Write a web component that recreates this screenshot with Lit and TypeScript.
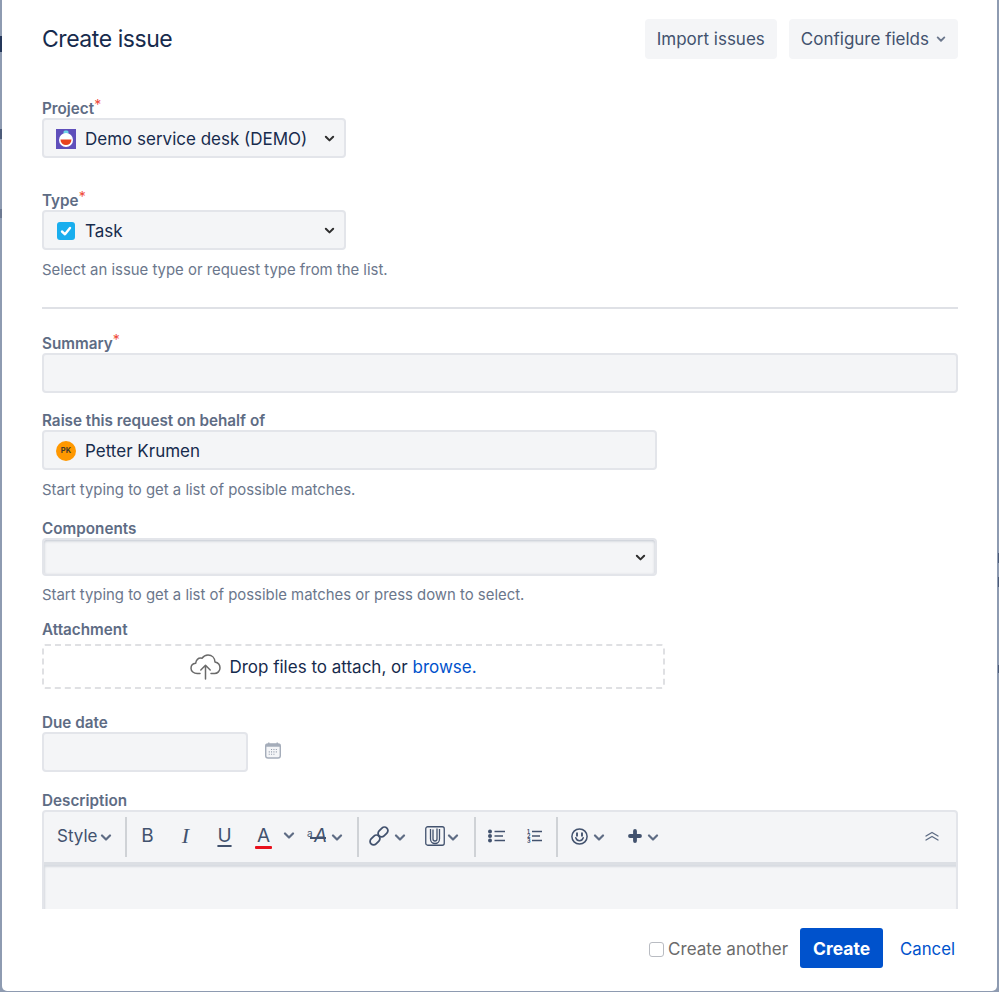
import { LitElement, css, html } from 'lit';
import { customElement } from 'lit/decorators.js';

const chevron = (cls = 'chev') => html`
  <svg class=${cls} viewBox="0 0 12 8"><path d="M2 1.5 6 5.5 10 1.5" fill="none" stroke="currentColor" stroke-width="2.2" stroke-linecap="round" stroke-linejoin="round"/></svg>
`;

const projectIcon = html`
  <svg class="project-icon" viewBox="0 0 20 20">
    <rect width="20" height="20" fill="#5f4fbb"/>
    <rect x="7.5" y="1.5" width="5" height="3.5" rx="1.5" fill="#6fd6e8"/>
    <circle cx="10" cy="11" r="7" fill="#fff"/>
    <path d="M4.5 10.500h11a5.500 5.500 0 0 1-11 0z" fill="#e8431f"/>
  </svg>
`;

const taskIcon = html`
  <svg class="task-icon" viewBox="0 0 18 18">
    <rect width="18" height="18" rx="3" fill="#19aeee"/>
    <path d="M5 9.500 8 12.300 13 6" fill="none" stroke="#fff" stroke-width="2.400" stroke-linecap="round" stroke-linejoin="round"/>
  </svg>
`;

const cloudIcon = html`
  <svg class="cloud" viewBox="0 0 31 26" fill="none" stroke="#6a6a6a" stroke-width="1.500" stroke-linecap="round" stroke-linejoin="round">
    <path d="M10 19.500H7.200C3.800 19.500 1 17.300 1 14.300c0-2.700 2-4.700 4.600-5C6.400 5.600 8.800 3.600 12 4.200 13.600 2 15.800 1 18 1c4 0 6.800 3 7 7 2.900.6 5 3 5 6 0 3-2.400 5.500-5.500 5.500H21"/>
    <path d="M15.500 25V11.500M10.800 16l4.700-4.700 4.700 4.700"/>
  </svg>
`;

const calendarIcon = html`
  <svg class="calendar" viewBox="0 0 17 18">
    <rect x=".75" y="2" width="15.500" height="15" rx="2.500" fill="#f4f5f7" stroke="#a5adba" stroke-width="1.500"/>
    <rect x=".75" y="2" width="15.500" height="3" fill="#a5adba"/>
    <path d="M4 .5v2M13 .5v2" stroke="#a5adba" stroke-width="1.500"/>
    <path d="M6.500 8h1M9 8h1M11.500 8h1M4 10.500h1M6.500 10.500h1M9 10.500h1M11.500 10.500h1M4 13h1M6.500 13h1M9 13h1" stroke="#8993a4" stroke-width="1.200"/>
  </svg>
`;

const linkIcon = html`
  <svg class="t-link" viewBox="0 0 20 20" fill="none" stroke="#42526e" stroke-width="1.800">
    <rect x="-1" y="-3.500" width="11" height="7" rx="3.500" transform="translate(6 14) rotate(-45) translate(-4.500 0)"/>
    <rect x="-1" y="-3.500" width="11" height="7" rx="3.500" transform="translate(14 6) rotate(-45) translate(-4.500 0)"/>
  </svg>
`;

const attachIcon = html`
  <svg class="t-attach" viewBox="0 0 20 20" fill="none" stroke="#42526e" stroke-width="1.300">
    <rect x=".75" y=".75" width="18.500" height="18.500" rx="2"/>
    <path d="M5.500 3v10a4.500 4.500 0 0 0 9 0V3"/>
    <path d="M8 3.500v9.500a2 2 0 0 0 4 0V2.500"/>
  </svg>
`;

const bulletIcon = html`
  <svg class="t-bullets" viewBox="0 0 17 14">
    <circle cx="2" cy="2.500" r="2" fill="#42526e"/>
    <circle cx="2" cy="7" r="2" fill="#42526e"/>
    <circle cx="2" cy="11.500" r="2" fill="#42526e"/>
    <path d="M6.500 2.500H17M6.500 7H15M6.500 11.500H17" stroke="#42526e" stroke-width="1.400"/>
  </svg>
`;

const numberIcon = html`
  <svg class="t-numbers" viewBox="0 0 15 14">
    <text class="tiny-digits" x="0" y="4.500">1</text>
    <text class="tiny-digits" x="0" y="9">2</text>
    <text class="tiny-digits" x="0" y="13.500">3</text>
    <path d="M5 2.500H15M5 7H13M5 11.500H15" stroke="#42526e" stroke-width="1.400"/>
  </svg>
`;

const smileIcon = html`
  <svg class="t-smile" viewBox="0 0 17 17" fill="none" stroke="#42526e" stroke-width="1.500">
    <circle cx="8.500" cy="8.500" r="7.600"/>
    <path d="M4.800 9.800c.6 2 2 3 3.700 3s3.100-1 3.700-3" stroke-linecap="round"/>
    <path d="M6 5.200v2.600M11 5.200v2.600" stroke-width="1.900" stroke-linecap="round"/>
  </svg>
`;

const plusIcon = html`
  <svg class="t-plus" viewBox="0 0 14 14">
    <path d="M7 2v10M2 7h10" stroke="#42526e" stroke-width="3.800" stroke-linecap="round"/>
  </svg>
`;

const collapseIcon = html`
  <svg class="t-collapse" viewBox="0 0 14 10" fill="none" stroke="#5e6c84" stroke-width="1.400" stroke-linecap="round" stroke-linejoin="round">
    <path d="M1 5 7 1.500 13 5M1 9 7 5.500 13 9"/>
  </svg>
`;

@customElement('app-root')
export class AppRoot extends LitElement {
  static styles = css`
    :host {
      display: block;
      width: 999px;
      height: 992px;
      background:
        linear-gradient(#24375a, #24375a) 0 36px / 2px 16px no-repeat,
        linear-gradient(#4c5c7a, #4c5c7a) 0 129px / 2px 10px no-repeat,
        linear-gradient(#6d7a92, #6d7a92) 0 209px / 2px 9px no-repeat,
        linear-gradient(#4c5c7a, #4c5c7a) 998px 553px / 1px 10px no-repeat,
        linear-gradient(#4c5c7a, #4c5c7a) 998px 577px / 1px 10px no-repeat,
        linear-gradient(#4c5c7a, #4c5c7a) 998px 665px / 1px 8px no-repeat,
        #8e9bb1;
      font-family: Inter, 'Liberation Sans', sans-serif;
      color: #172b4d;
    }

    .dialog {
      box-sizing: border-box;
      margin-left: 2px;
      width: 995px;
      height: 991px;
      background: #fff;
      border-radius: 0 0 5px 5px;
      display: flex;
      flex-direction: column;
    }

    .body {
      flex: 1;
      min-height: 0;
      overflow: hidden;
      padding: 19px 39px 0 40px;
    }

    .header {
      display: flex;
      align-items: center;
      gap: 12px;
      height: 40px;
    }

    .title {
      flex: 1;
      margin: 0;
      font-size: 23px;
      font-weight: 400;
      letter-spacing: -0.45px;
      color: #172b4d;
    }

    .head-btn {
      box-sizing: border-box;
      height: 40px;
      padding: 0 12px;
      display: flex;
      align-items: center;
      gap: 7px;
      background: #f4f5f7;
      border-radius: 4px;
      color: #42526e;
      font-size: 17px;
    }

    .head-btn .chev {
      width: 10px;
      height: 7px;
      color: #6b778c;
    }

    .label {
      height: 20px;
      line-height: 22px;
      font-size: 15.250px;
      font-weight: 600;
      color: #5e6c84;
      white-space: nowrap;
    }

    .req {
      color: #ef4a3a;
      font-size: 14px;
      font-weight: 400;
      position: relative;
      top: -4px;
      line-height: 0;
    }

    .control {
      box-sizing: border-box;
      height: 40px;
      display: flex;
      align-items: center;
      background: #f4f5f7;
      border: 2px solid #e3e5ea;
      border-radius: 4px;
      font-size: 17px;
      padding: 1px 0 0 12px;
      color: #172b4d;
    }

    .control .chev {
      width: 11px;
      height: 8px;
      margin-left: auto;
      margin-right: 9px;
      color: #2f2f2f;
    }

    .w-select {
      width: 304px;
    }

    .w-full {
      width: 916px;
    }

    .w-user {
      width: 615px;
    }

    .w-date {
      width: 206px;
    }

    .native {
      height: 38px;
      box-shadow: inset 0 1px 3px rgba(9, 30, 66, 0.22);
    }

    .project-icon {
      width: 20px;
      height: 20px;
      margin-right: 9px;
      flex: none;
    }

    .task-icon {
      width: 18px;
      height: 18px;
      margin: 0 10px 0 1px;
      flex: none;
    }

    .avatar {
      width: 20px;
      height: 20px;
      margin-right: 9px;
      border-radius: 50%;
      background: #ff9800;
      color: #42382a;
      font-size: 7.500px;
      font-weight: 700;
      display: flex;
      align-items: center;
      justify-content: center;
      flex: none;
    }

    .help {
      height: 20px;
      line-height: 22px;
      font-size: 14.900px;
      color: #6b778c;
      white-space: nowrap;
    }

    .mt-type {
      margin-top: 32px;
    }

    .mt-help {
      margin-top: 9px;
    }

    .mt-project {
      margin-top: 39px;
    }

    .mt-raise {
      margin-top: 17px;
    }

    .mt-components {
      margin-top: 19px;
    }

    .mt-help-small {
      margin-top: 8px;
    }

    .mt-attachment {
      margin-top: 15px;
    }

    .mt-due {
      margin-top: 23px;
    }

    .mt-description {
      margin-top: 18px;
    }

    .rule {
      height: 2px;
      background: #dfe1e6;
      margin: 28px 0 24px;
    }

    .drop {
      box-sizing: border-box;
      width: 623px;
      height: 45px;
      margin-top: 5px;
      border: 2px dashed #dfe0e3;
      border-radius: 3px;
      display: flex;
      align-items: center;
      justify-content: center;
      gap: 8px;
      font-size: 17px;
      color: #172b4d;
      padding-right: 40px;
    }

    .drop a {
      color: #0052cc;
      text-decoration: none;
    }

    .cloud {
      width: 31px;
      height: 26px;
      flex: none;
    }

    .date-row {
      display: flex;
      align-items: center;
      gap: 17px;
    }

    .calendar {
      width: 16px;
      height: 17px;
      margin-bottom: 3px;
      flex: none;
    }

    .editor {
      width: 916px;
      box-sizing: border-box;
      border: 2px solid #e3e5ea;
      border-radius: 4px 4px 0 0;
      background: #f4f5f7;
    }

    .toolbar {
      height: 53px;
      padding: 0 17px 2px 13px;
      display: flex;
      align-items: center;
      color: #42526e;
      border-bottom: 3px solid #dcdfe4;
      box-sizing: border-box;
    }

    .style {
      width: 40px;
      font-size: 17px;
      flex: none;
    }

    .toolbar .chev {
      flex: none;
      width: 12px;
      height: 8px;
      color: #5e6c84;
    }

    .sep {
      flex: none;
      width: 2px;
      height: 40px;
      margin-top: 2px;
      background: #cfd2d6;
    }

    .tool {
      flex: none;
      width: 39px;
      text-align: center;
      font-size: 19px;
      line-height: 24px;
    }

    .tool-i {
      font-family: 'Liberation Serif', serif;
      font-style: italic;
      font-size: 22px;
    }

    .tool-u {
      text-decoration: underline;
      text-underline-offset: 3px;
      text-decoration-thickness: 2px;
    }

    .tool-a {
      position: relative;
    }

    .tool-a::after {
      content: '';
      position: absolute;
      left: 11px;
      bottom: -1px;
      width: 17px;
      height: 3px;
      border-radius: 1px;
      background: #e8101c;
    }

    .tool-b {
      margin-left: 1px;
      margin-right: -1px;
    }

    .small-a {
      flex: none;
      width: 20px;
      margin-left: 12px;
      position: relative;
      font-size: 19px;
      font-style: italic;
      line-height: 24px;
      text-align: right;
    }

    .small-a span {
      position: absolute;
      left: 0;
      top: -3px;
      font-size: 10px;
      font-style: normal;
    }

    .small-a::after {
      content: '';
      position: absolute;
      left: 3px;
      right: 1px;
      top: 13px;
      height: 1.500px;
      background: #42526e;
    }

    .ml-2 {
      margin-left: 2px;
    }

    .ml-3 {
      margin-left: 3px;
    }

    .ml-4 {
      margin-left: 4px;
    }

    .ml-5 {
      margin-left: 5px;
    }

    .sep-style {
      margin-left: 13px;
    }

    .sep-a {
      margin-left: 14px;
    }

    .sep-attach {
      margin-left: 15px;
    }

    .sep-list {
      margin-left: 14px;
    }

    .t-link {
      flex: none;
      width: 20px;
      height: 20px;
      margin-left: 10px;
    }

    .t-attach {
      flex: none;
      width: 20px;
      height: 20px;
      margin-left: 19px;
    }

    .t-bullets {
      flex: none;
      width: 17px;
      height: 14px;
      margin-left: 12px;
    }

    .t-numbers {
      flex: none;
      width: 15px;
      height: 14px;
      margin-left: 22px;
    }

    .tiny-digits {
      font-size: 5.500px;
      font-weight: 700;
      fill: #42526e;
    }

    .t-smile {
      flex: none;
      width: 17px;
      height: 17px;
      margin-left: 13px;
    }

    .t-plus {
      flex: none;
      width: 14px;
      height: 14px;
      margin-left: 23px;
    }

    .t-collapse {
      flex: none;
      width: 14px;
      height: 10px;
      margin-left: auto;
    }

    .editor-area {
      height: 120px;
      box-shadow: inset 1px 2px 2px rgba(9, 30, 66, 0.12);
    }

    .footer {
      flex: none;
      box-sizing: border-box;
      height: 82px;
      padding: 0 42px 4px 0;
      display: flex;
      align-items: center;
      justify-content: flex-end;
    }

    .another {
      display: flex;
      align-items: center;
      gap: 4px;
      margin-top: 2px;
      font-size: 17px;
      color: #6b6b6b;
    }

    .check {
      box-sizing: border-box;
      width: 15px;
      height: 15px;
      border: 1px solid #b9bcc2;
      border-radius: 3px;
      background: #fff;
    }

    .create {
      box-sizing: border-box;
      width: 83px;
      height: 40px;
      margin-left: 12px;
      padding-top: 1px;
      display: flex;
      align-items: center;
      justify-content: center;
      border-radius: 3px;
      background: #0052cc;
      color: #fff;
      font-size: 17.500px;
      font-weight: 700;
    }

    .cancel {
      margin: 2px 0 0 17px;
      color: #0052cc;
      font-size: 16.750px;
    }
  `;

  render() {
    return html`
      <div class="dialog">
        <div class="body">
          <div class="header">
            <h1 class="title">Create issue</h1>
            <div class="head-btn">Import issues</div>
            <div class="head-btn">Configure fields ${chevron()}</div>
          </div>

          <div class="label mt-project">Project<span class="req">*</span></div>
          <div class="control w-select">${projectIcon} Demo service desk (DEMO) ${chevron()}</div>

          <div class="label mt-type">Type<span class="req">*</span></div>
          <div class="control w-select">${taskIcon} Task ${chevron()}</div>
          <div class="help mt-help">Select an issue type or request type from the list.</div>

          <div class="rule"></div>

          <div class="label">Summary<span class="req">*</span></div>
          <div class="control w-full"></div>

          <div class="label mt-raise">Raise this request on behalf of</div>
          <div class="control w-user"><span class="avatar">PK</span> Petter Krumen</div>
          <div class="help mt-help">Start typing to get a list of possible matches.</div>

          <div class="label mt-components">Components</div>
          <div class="control w-user native">${chevron()}</div>
          <div class="help mt-help-small">Start typing to get a list of possible matches or press down to select.</div>

          <div class="label mt-attachment">Attachment</div>
          <div class="drop">${cloudIcon}<span>Drop files to attach, or <a>browse.</a></span></div>

          <div class="label mt-due">Due date</div>
          <div class="date-row">
            <div class="control w-date"></div>
            ${calendarIcon}
          </div>

          <div class="label mt-description">Description</div>
          <div class="editor">
            <div class="toolbar">
              <div class="style">Style</div>
              <span class="ml-3">${chevron()}</span>
              <div class="sep sep-style"></div>
              <div class="tool tool-b">B</div>
              <div class="tool tool-i">I</div>
              <div class="tool tool-u">U</div>
              <div class="tool tool-a">A</div>
              ${chevron()}
              <div class="small-a"><span>a</span>A</div>
              <span class="ml-4">${chevron()}</span>
              <div class="sep sep-a"></div>
              ${linkIcon}
              <span class="ml-5">${chevron()}</span>
              ${attachIcon}
              <span class="ml-2">${chevron()}</span>
              <div class="sep sep-attach"></div>
              ${bulletIcon} ${numberIcon}
              <div class="sep sep-list"></div>
              ${smileIcon}
              <span class="ml-5">${chevron()}</span>
              ${plusIcon}
              <span class="ml-5">${chevron()}</span>
              ${collapseIcon}
            </div>
            <div class="editor-area"></div>
          </div>
        </div>

        <div class="footer">
          <div class="another"><span class="check"></span> Create another</div>
          <div class="create">Create</div>
          <div class="cancel">Cancel</div>
        </div>
      </div>
    `;
  }
}
